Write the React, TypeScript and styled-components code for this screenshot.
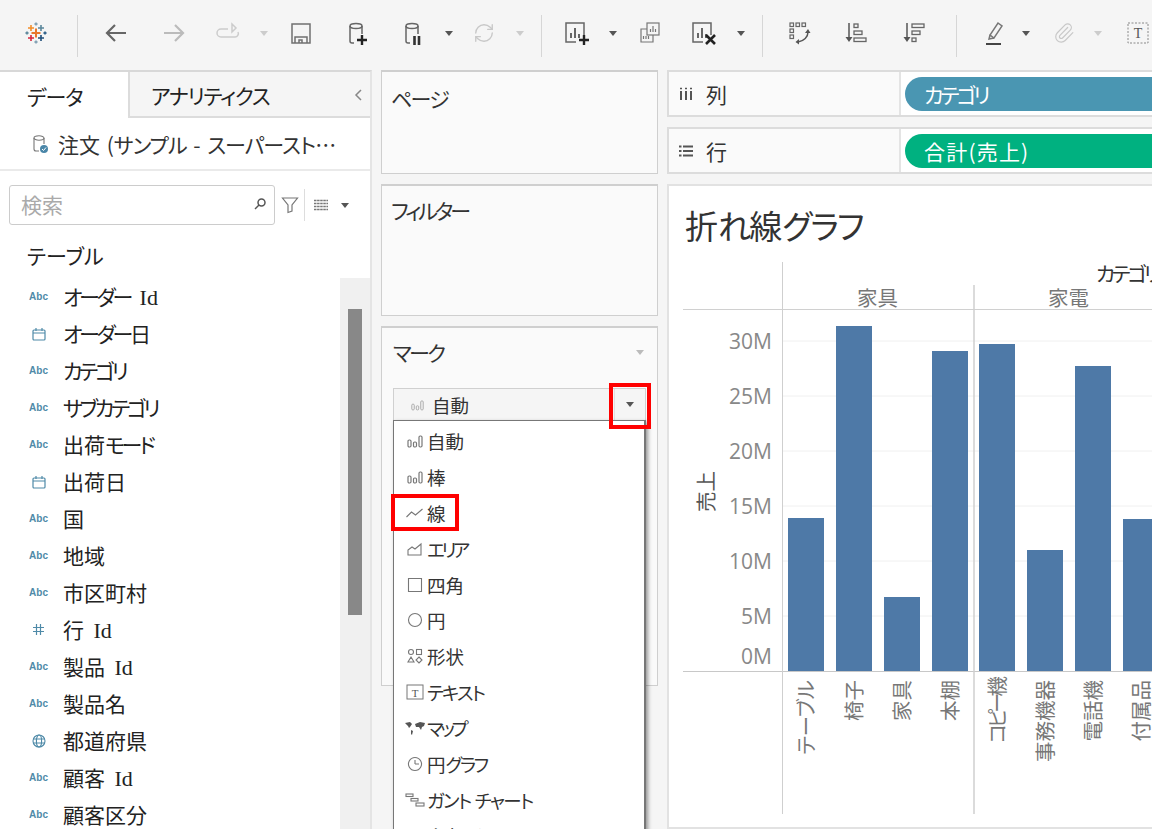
import React from "react";
import styled, { createGlobalStyle } from "styled-components";
import { Paperclip, RefreshCw } from "lucide-react";

const Global = createGlobalStyle`
  html, body { margin: 0; padding: 0; background: #f5f5f5; }
  * { box-sizing: border-box; }
`;

const Page = styled.div`
  width: 1152px; height: 829px; overflow: hidden; display: flex; flex-direction: column;
  background: #f5f5f5; color: #222;
  font-family: "Noto Sans CJK JP", "Noto Sans", sans-serif;
  font-feature-settings: "palt";
`;
const Toolbar = styled.div`height: 70px; flex: none; display: flex; align-items: center; margin-top: -2px;`;
const Slot = styled.div<{ $w: number }>`
  width: ${p => p.$w}px; flex: none; display: flex; align-items: center; justify-content: center;
`;
const ToolSep = styled.div`width: 1px; height: 42px; margin-top: 6px; background: #d6d6d6;`;
const Caret = styled.span<{ $tone?: string }>`
  display: inline-block; width: 0; height: 0; flex: none;
  border-left: 4px solid transparent; border-right: 4px solid transparent;
  border-top: 5px solid ${p => p.$tone ?? "#555"};
`;
const Main = styled.div`flex: 1; min-height: 0; display: flex; margin-top: 2px;`;
const Kana = styled.span<{ $ls: number }>`letter-spacing: ${p => p.$ls}px;`;
const Latin = styled.span`font-family: "Liberation Serif", serif; font-size: 22px; margin-left: 4px;`;

const Side = styled.aside`
  width: 372px; flex: none; display: flex; flex-direction: column; background: #fff;
  border-top: 2px solid #d8d8d8; border-right: 2px solid #e4e4e4; overflow: hidden;
`;
const Tabs = styled.div`height: 46px; flex: none; display: flex;`;
const ActiveTab = styled.div`width: 128px; padding-left: 27px; font-size: 21px; line-height: 48px;`;
const InactiveTab = styled.div`
  flex: 1; display: flex; justify-content: space-between; align-items: center;
  padding: 2px 7px 0 21px; font-size: 21px; background: #f5f5f5;
  border-left: 2px solid #dcdcdc; border-bottom: 2px solid #dcdcdc;
`;
const Source = styled.div`
  height: 53px; flex: none; display: flex; align-items: center; gap: 9px; padding-left: 32px;
  font-size: 21px; color: #333; border-bottom: 2px solid #eaeaea; white-space: nowrap; word-spacing: 2px;
`;
const SearchRow = styled.div`height: 54px; flex: none; display: flex; align-items: flex-end; padding-left: 9px;`;
const SearchBox = styled.div`
  width: 266px; height: 40px; display: flex; align-items: center; justify-content: space-between;
  padding: 0 7px 2px 11px; border: 1px solid #ccc; border-radius: 3px; font-size: 21px; color: #aaa;
`;
const SearchTools = styled.div`height: 40px; display: flex; align-items: center;`;
const ToolDivider = styled.div`width: 1px; height: 32px; background: #ddd;`;
const Heading = styled.div`height: 53px; flex: none; padding: 12px 0 0 27px; font-size: 21px; line-height: 37px;`;
const ListArea = styled.div`flex: 1; min-height: 0; display: flex;`;
const FieldList = styled.div`flex: 1; min-width: 0;`;
const Field = styled.div`height: 37px; display: flex; align-items: center; padding: 0 0 2px 27px; font-size: 21px; white-space: pre;`;
const FieldIcon = styled.div`
  width: 23px; margin: 2px 13px 0 0; flex: none; display: flex; justify-content: center;
  font: bold 10px "Liberation Sans", sans-serif; color: #4f8aa8;
`;
const Track = styled.div`width: 30px; flex: none; background: #f0f0f0; padding: 31px 0 0 8px;`;
const Thumb = styled.div`width: 14px; height: 306px; background: #888;`;

const MiddleColumn = styled.div`
  width: 277px; flex: none; margin: 0 9px; display: flex; flex-direction: column; gap: 10px;
`;
const Card = styled.section<{ $h: number; $pad: number }>`
  height: ${p => p.$h}px; flex: none; padding: ${p => p.$pad}px 11px 0 9px; background: #fafafa;
  border: 1px solid #cfcfcf; border-top-width: 2px;
  font-size: 21px; line-height: 30px; color: #333;
`;
const MarkHead = styled.div`display: flex; justify-content: space-between; align-items: center; padding: 0 2px; margin-bottom: 21px;`;
const Selector = styled.div`
  position: relative; height: 33px; margin-left: 2px; display: flex; align-items: center;
  background: #f5f5f5; border: 1px solid #d0d0d0; font-size: 18.5px; padding-left: 17px; gap: 8px;
`;
const SelectorCaret = styled.div`
  position: absolute; right: 0; top: 0; bottom: 0; width: 31px; display: flex; align-items: center;
  justify-content: center; border-left: 1px solid #e0e0e0;
`;
const RedBox = styled.div`
  position: absolute; left: 215px; top: -6px; width: 42px; height: 46px; border: 4px solid #ff0000; z-index: 3;
`;
const Menu = styled.div`
  position: absolute; left: -1px; right: -1px; top: 31px; padding-top: 2px; height: 480px; background: #fff;
  border: 1px solid #777; border-right-width: 2px; box-shadow: 2px 2px 4px rgba(0,0,0,.4); z-index: 2;
`;
const MenuItem = styled.div<{ $marked?: boolean }>`
  position: relative; height: 35.9px; display: flex; align-items: center; padding-left: 9px;
  font-size: 18.5px; color: #333; white-space: pre;
  ${p => p.$marked ? `&::after { content: ""; position: absolute; box-sizing: border-box; left: -3px; top: -1px; width: 68px; height: 37px; border: 4px solid #ff0000; }` : ""}
`;
const MenuIcon = styled.div`width: 24px; flex: none; display: flex; justify-content: center;`;

const RightColumn = styled.div`flex: 1; min-width: 0; margin-right: -10px; display: flex; flex-direction: column; gap: 10px;`;
const Shelf = styled.div`
  height: 47px; flex: none; display: flex; background: #fff;
  border: 1px solid #dcdcdc; border-top-width: 2px; border-bottom-width: 2px; border-left-width: 2px;
`;
const ShelfLabel = styled.div`
  width: 232px; flex: none; display: flex; align-items: center; gap: 13px; padding-left: 10px;
  background: #fafafa; border-right: 2px solid #e4e4e4; font-size: 21px; color: #333;
`;
const ShelfBody = styled.div`flex: 1; display: flex; align-items: center; padding-left: 4px;`;
const Pill = styled.div<{ $color: string; $ls?: number }>`
  flex: 1; height: 34px; display: flex; align-items: center; padding-left: 19px; color: #fff;
  font-size: 21px; letter-spacing: ${p => p.$ls ?? 0}px; background: ${p => p.$color}; border-radius: 17px 0 0 17px;
`;
const Viz = styled.section`
  flex: 1; min-height: 0; overflow: hidden; background: #fff;
  border: 2px solid #e2e2e2; border-right: 0;
`;
const VizTitle = styled.h1`
  margin: 0; height: 72px; padding: 16px 0 0 16px; font-size: 33px; line-height: 46px; font-weight: 400; color: #333;
`;
const ChartSvg = styled.svg`display: block; font-family: "Noto Sans CJK JP", sans-serif; font-feature-settings: "palt";`;
const HeaderText = styled.text<{ $tone?: string; $ls?: number }>`
  font-size: 20.5px; fill: ${p => p.$tone ?? "#777"}; letter-spacing: ${p => p.$ls ?? 0}px;
`;
const TickText = styled.text`font: 21px "Open Sans", sans-serif; fill: #888; text-anchor: end;`;
const BarLabel = styled.text<{ $ls: number }>`font-size: 20.5px; fill: #777; text-anchor: end; letter-spacing: ${p => p.$ls}px;`;

/* Kana in the original UI font is narrower than in the installed one */
const Jp = ({ t, ls = -3.2 }: { t: string; ls?: number }) => (
  <span>
    {t.split(/([ぁ-んァ-ヶー]+| Id)/).map((part, i) =>
      part === " Id" ? <Latin key={i}> Id</Latin>
        : i % 2 ? <Kana key={i} $ls={ls}>{part}</Kana>
          : part
    )}
  </span>
);

const G = ({ w = 24, h = 24, children }: { w?: number; h?: number; children: React.ReactNode }) => (
  <svg width={w} height={h} viewBox={`0 0 ${w} ${h}`} fill="none" stroke="#666" strokeWidth="1.5">{children}</svg>
);

const Plus = ({ x, y, s, c }: { x: number; y: number; s: number; c: string }) => (
  <path d={`M${x - s} ${y}H${x + s}M${x} ${y - s}V${y + s}`} stroke={c} strokeWidth={s > 3 ? 2 : 1.6} />
);
const Logo = () => (
  <G>
    <Plus x={12} y={12} s={4.5} c="#e8762b" />
    <Plus x={7} y={7} s={3} c="#f28e2b" />
    <Plus x={17} y={7} s={3} c="#5b879b" />
    <Plus x={7} y={17} s={3} c="#d7263d" />
    <Plus x={17} y={17} s={3} c="#1f4e79" />
    <Plus x={12} y={3} s={1.6} c="#7f9fb2" />
    <Plus x={12} y={21} s={1.6} c="#7f9fb2" />
    <Plus x={3} y={12} s={1.6} c="#5b879b" />
    <Plus x={21} y={12} s={1.6} c="#2d5f88" />
  </G>
);
const Arrow = ({ flip, c }: { flip?: boolean; c: string }) => (
  <G>
    <path d={flip ? "M2 12H21M13 4l8 8-8 8" : "M22 12H3M11 4l-8 8 8 8"} stroke={c} strokeWidth="2.2" />
  </G>
);
const Redo = () => (
  <G>
    <path d="M12 8H5a3.5 3.5 0 0 0 0 8h14a3.5 3.5 0 0 0 3-5M16 3v8l4-4z" stroke="#ccc" />
  </G>
);
const Save = () => (
  <G>
    <rect x="3" y="3" width="18" height="19" stroke="#707070" />
    <path d="M6 22v-6h12v6M10 22v-3h3v3" stroke="#707070" />
  </G>
);
const Db = ({ pause }: { pause?: boolean }) => (
  <G>
    <ellipse cx="10" cy="5" rx="6" ry="2.5" stroke="#666" />
    <path d="M4 5v15a2 2 0 0 0 2 2h2M16 5v8" stroke="#666" />
    {pause
      ? <path d="M12.5 15v9M17 15v9" stroke="#333" strokeWidth="2.6" />
      : <path d="M11 19h10M16 14v10" stroke="#222" strokeWidth="2.4" />}
  </G>
);
const Sheet = ({ mark }: { mark: "plus" | "x" }) => (
  <G w={26} h={26}>
    <path d="M20 15V3H2v19h10" stroke="#666" />
    <path d="M7 18v-5M11 18V8M15 18v-4" stroke="#666" strokeWidth="2" />
    {mark === "plus"
      ? <path d="M15 20h10M20 15v10" stroke="#222" strokeWidth="2.4" />
      : <path d="M15 15l9 9M24 15l-9 9" stroke="#222" strokeWidth="2.6" />}
  </G>
);
const Duplicate = () => (
  <G>
    <rect x="9" y="2" width="12" height="12" stroke="#777" strokeWidth="1.2" />
    <path d="M12.5 11V8M15 11V5M17.5 11V8" stroke="#777" strokeWidth="1.2" />
    <path d="M9 8H3v13h12v-7" stroke="#777" strokeWidth="1.2" />
    <path d="M5.5 18v-3M8 18v-3M10.500 18v-3" stroke="#777" strokeWidth="1.2" />
  </G>
);
const Swap = () => (
  <G>
    <g strokeWidth="1.2" stroke="#666">
      <rect x="2" y="2" width="3.500" height="3.500" /><rect x="8" y="2" width="3.500" height="3.500" /><rect x="14" y="2" width="3.500" height="3.500" />
      <rect x="2" y="8" width="3.500" height="3.500" /><rect x="2" y="14" width="3.500" height="3.500" />
    </g>
    <path d="M20 11c0 5-4 9-10 10" stroke="#555" />
    <path d="M17 12l3-4 2.500 4zM11 18l-3.500 3 3.500 2.500z" fill="#555" stroke="none" />
  </G>
);
const Sort = ({ desc }: { desc?: boolean }) => (
  <G>
    <path d="M4 2v17" stroke="#555" />
    <path d="M0.500 16h7L4 21z" fill="#555" stroke="none" />
    <g strokeWidth="1.300" stroke="#666">
      {desc ? (
        <>
          <rect x="9" y="3" width="12" height="3.500" /><rect x="9" y="10" width="8" height="3.500" /><rect x="9" y="17" width="4" height="3.500" />
        </>
      ) : (
        <>
          <rect x="9" y="3" width="4" height="3.500" /><rect x="9" y="10" width="8" height="3.500" /><rect x="9" y="17" width="12" height="3.500" />
        </>
      )}
    </g>
  </G>
);
const Highlighter = () => (
  <G>
    <path d="M15 2l4 3-8 12-4-3zM7 14l-1 4 5-1" stroke="#777" />
    <path d="M3 23h15" stroke="#444" strokeWidth="2" />
  </G>
);
const TextBox = () => (
  <svg width="22" height="22" viewBox="0 0 22 22" fill="none">
    <rect x="1" y="1" width="20" height="20" stroke="#888" strokeDasharray="2 1.500" />
    <text x="11" y="16" textAnchor="middle" fontFamily="Liberation Serif" fontSize="14" fill="#555">T</text>
  </svg>
);
const Chevron = () => <G w={10} h={14}><path d="M8 2L3 7l5 5" stroke="#888" /></G>;
const SourceIcon = () => (
  <G w={17} h={20}>
    <ellipse cx="7" cy="4" rx="5" ry="2.200" stroke="#777" strokeWidth="1.100" />
    <path d="M2 4v11a2 2 0 0 0 2 2h3M12 4v6" stroke="#777" strokeWidth="1.100" />
    <circle cx="12" cy="15" r="4" fill="#4a86a8" stroke="none" />
    <path d="M10 15l1.500 1.500 2.500-3" stroke="#fff" strokeWidth="1" />
  </G>
);
const Magnifier = () => <G w={14} h={14}><circle cx="8.500" cy="5.500" r="3.500" stroke="#555" /><path d="M6 8l-4 4" stroke="#555" /></G>;
const Funnel = () => <G w={18} h={18}><path d="M1.500 2h15L11 9v6l-4 1.500V9z" stroke="#777" strokeWidth="1.200" /></G>;
const Lines = () => (
  <G w={16} h={14}>
    <path d="M1 2.500h14M1 5.500h14M1 8.500h14M1 11.500h14" stroke="#777" strokeWidth="1.500" strokeDasharray="2.500 0.600" />
  </G>
);
const Calendar = () => (
  <G w={14} h={14}><path d="M2 3h10a1 1 0 0 1 1 1v8a1 1 0 0 1-1 1H2a1 1 0 0 1-1-1V4a1 1 0 0 1 1-1zM1 6h12M4 1v3M10 1v3" stroke="#4f8aa8" strokeWidth="1.200" /></G>
);
const Hash = () => <G w={13} h={13}><path d="M4.500 1v11M8.500 1v11M1 4.500h11M1 8.500h11" stroke="#4f8aa8" strokeWidth="1.200" /></G>;
const Globe = () => (
  <G w={14} h={14}>
    <circle cx="7" cy="7" r="6" stroke="#4f8aa8" strokeWidth="1.100" />
    <ellipse cx="7" cy="7" rx="2.600" ry="6" stroke="#4f8aa8" strokeWidth="1.100" />
    <path d="M1 5h12M1 9h12" stroke="#4f8aa8" strokeWidth="1.100" />
  </G>
);
const Bars = ({ tone = "#777", w = 16 }: { tone?: string; w?: number }) => (
  <svg width={w} height={14} viewBox="0 0 16 14" fill="none">
    <g stroke={tone} strokeWidth="1.200">
      <rect x="1" y="6" width="3" height="7" rx="1.200" /><rect x="6.500" y="8" width="3" height="5" rx="1.200" /><rect x="12" y="2" width="3" height="11" rx="1.200" />
    </g>
  </svg>
);
const Pen = ({ d, w = 18, h = 14 }: { d: string; w?: number; h?: number }) => (
  <G w={w} h={h}><path d={d} stroke="#777" strokeWidth="1.100" /></G>
);
const MapGlyph = () => (
  <svg width="21" height="14" viewBox="0 0 21 14" fill="#555">
    <path d="M0 2l5-1 2 2-2 3-1 1-1-2zM6 9l2 1-1 4-1-1zM10 3l5-2 5 1-1 3-2 1-1 3-2-3-3 0z" />
  </svg>
);
const Shapes = () => (
  <G w={16} h={16}>
    <g stroke="#777" strokeWidth="1.100">
      <circle cx="4" cy="4" r="2.500" /><rect x="9.500" y="1.500" width="5" height="5" />
      <path d="M4 9l3 5H1zM12 9l3 3-3 3-3-3z" />
    </g>
  </G>
);
const Gantt = () => (
  <G w={20} h={14}>
    <g stroke="#777" strokeWidth="1.100"><rect x="1" y="1" width="7" height="2.500" /><rect x="6" y="5.500" width="7" height="2.500" /><rect x="11" y="10" width="8" height="3" /></g>
  </G>
);

const fields: [string, "abc" | "cal" | "num" | "geo"][] = [
  ["オーダー Id", "abc"], ["オーダー日", "cal"], ["カテゴリ", "abc"], ["サブカテゴリ", "abc"], ["出荷モード", "abc"],
  ["出荷日", "cal"], ["国", "abc"], ["地域", "abc"], ["市区町村", "abc"], ["行 Id", "num"], ["製品 Id", "abc"],
  ["製品名", "abc"], ["都道府県", "geo"], ["顧客 Id", "abc"], ["顧客区分", "abc"],
];
const fieldGlyph = (k: string) => k === "abc" ? "Abc" : k === "cal" ? <Calendar /> : k === "num" ? <Hash /> : <Globe />;

const menu: [string, number, React.ReactNode][] = [
  ["自動", 0, <Bars />],
  ["棒", 0, <Bars />],
  ["線", 0, <Pen d="M0.500 11l5-5 4 3 7-6" />],
  ["エリア", -3.5, <Pen w={16} d="M1 13V8l4-3 3 2 6-5v11z" />],
  ["四角", 0, <Pen w={16} h={16} d="M1.500 1.500h13v13h-13z" />],
  ["円", 0, <G w={16} h={16}><circle cx="8" cy="8" r="6.500" stroke="#777" strokeWidth="1.100" /></G>],
  ["形状", 0, <Shapes />],
  ["テキスト", -1.8, <svg width="18" height="16" viewBox="0 0 18 16" fill="none"><rect x="1" y="1" width="16" height="14" stroke="#777" /><text x="9" y="12.500" textAnchor="middle" fontFamily="Liberation Serif" fontSize="11" fill="#555">T</text></svg>],
  ["マップ", -3.3, <MapGlyph />],
  ["円グラフ", -2.3, <Pen w={16} h={16} d="M8 1.500a6.500 6.500 0 1 1-.01 0zM8 8V4M8 8h4" />],
  ["ガント チャート", -1.6, <Gantt />],
  ["多角形", 0, <Pen w={16} h={14} d="M1 1h14v12H1z" />],
];

const bars: [number, number, string, number][] = [
  [788, 518, "テーブル", 0], [836, 326, "椅子", 0], [884, 597, "家具", 0], [932, 351, "本棚", 0],
  [979, 344, "コピー機", -4], [1027, 550, "事務機器", 0], [1075, 366, "電話機", 0], [1123, 519, "付属品", 0],
];
const ticks: [string, number][] = [["30M", 341], ["25M", 396], ["20M", 451], ["15M", 506], ["10M", 561], ["5M", 616]];

const Chart = () => (
  <ChartSvg width="490" height="569" viewBox="669 258 490 569">
    {ticks.map(([, y]) => <line key={y} x1="782" x2="1159" y1={y} y2={y} stroke="#f0f0f0" />)}
    {bars.map(([x, top]) => <rect key={x} x={x} y={top} width="36" height={671 - top} fill="#4e79a7" />)}
    <line x1="683" x2="1159" y1="309.500" y2="309.500" stroke="#d0d0d0" />
    <line x1="683" x2="1159" y1="671.500" y2="671.500" stroke="#c8c8c8" />
    <line x1="782.500" x2="782.500" y1="262" y2="814" stroke="#cfcfcf" />
    <line x1="974" x2="974" y1="285" y2="814" stroke="#cfcfcf" strokeWidth="1.500" />
    <HeaderText $tone="#333" $ls={-3} x="1096" y="282">カテゴリ</HeaderText>
    <HeaderText x="857" y="306">家具</HeaderText>
    <HeaderText x="1048" y="306">家電</HeaderText>
    {ticks.map(([t, y]) => <TickText key={t} x="772" y={y + 8}>{t}</TickText>)}
    <TickText x="772" y="664">0M</TickText>
    <HeaderText $tone="#555" transform="translate(714 512) rotate(-90)" x="0" y="0">売上</HeaderText>
    {bars.map(([x, , label, ls]) => (
      <BarLabel key={label} $ls={ls} transform={`translate(${x + 26} 680) rotate(-90)`} x="0" y="0">{label}</BarLabel>
    ))}
  </ChartSvg>
);

export default function App() {
  return (
    <Page>
      <Global />
      <Toolbar>
        <Slot $w={72}><Logo /></Slot>
        <Slot $w={10}><ToolSep /></Slot>
        <Slot $w={68}><Arrow c="#666" /></Slot>
        <Slot $w={48}><Arrow flip c="#bbb" /></Slot>
        <Slot $w={60}><Redo /></Slot>
        <Slot $w={12}><Caret $tone="#ccc" /></Slot>
        <Slot $w={62}><Save /></Slot>
        <Slot $w={52}><Db /></Slot>
        <Slot $w={60}><Db pause /></Slot>
        <Slot $w={10}><Caret /></Slot>
        <Slot $w={60}><RefreshCw size={22} strokeWidth={1.500} color="#c8c8c8" /></Slot>
        <Slot $w={12}><Caret $tone="#ccc" /></Slot>
        <Slot $w={30}><ToolSep /></Slot>
        <Slot $w={42}><Sheet mark="plus" /></Slot>
        <Slot $w={30}><Caret /></Slot>
        <Slot $w={44}><Duplicate /></Slot>
        <Slot $w={64}><Sheet mark="x" /></Slot>
        <Slot $w={10}><Caret /></Slot>
        <Slot $w={32}><ToolSep /></Slot>
        <Slot $w={44}><Swap /></Slot>
        <Slot $w={70}><Sort /></Slot>
        <Slot $w={46}><Sort desc /></Slot>
        <Slot $w={36}><ToolSep /></Slot>
        <Slot $w={42}><Highlighter /></Slot>
        <Slot $w={20}><Caret /></Slot>
        <Slot $w={56}><Paperclip size={22} strokeWidth={1.300} color="#c8c8c8" /></Slot>
        <Slot $w={12}><Caret $tone="#ccc" /></Slot>
        <Slot $w={68}><TextBox /></Slot>
      </Toolbar>
      <Main>
        <Side>
          <Tabs>
            <ActiveTab><Jp t="データ" ls={-1} /></ActiveTab>
            <InactiveTab><Jp t="アナリティクス" ls={-1.3} /><Chevron /></InactiveTab>
          </Tabs>
          <Source><SourceIcon /><Jp t="注文 (サンプル - スーパースト…" ls={-1} /></Source>
          <SearchRow>
            <SearchBox>検索<Magnifier /></SearchBox>
            <SearchTools>
              <Slot $w={29}><Funnel /></Slot>
              <ToolDivider />
              <Slot $w={32}><Lines /></Slot>
              <Slot $w={16}><Caret /></Slot>
            </SearchTools>
          </SearchRow>
          <Heading>テーブル</Heading>
          <ListArea>
            <FieldList>
              {fields.map(([name, kind]) => (
                <Field key={name}><FieldIcon>{fieldGlyph(kind)}</FieldIcon><Jp t={name} /></Field>
              ))}
            </FieldList>
            <Track><Thumb /></Track>
          </ListArea>
        </Side>
        <MiddleColumn>
          <Card $h={104} $pad={11}><Jp t="ページ" ls={-1.7} /></Card>
          <Card $h={132} $pad={9}><Jp t="フィルター" ls={-3} /></Card>
          <Card $h={360} $pad={9}>
            <MarkHead><Jp t="マーク" ls={-2.7} /><Caret $tone="#bbb" /></MarkHead>
            <Selector>
              <Bars tone="#aaa" w={13} />自動
              <SelectorCaret><Caret /></SelectorCaret>
              <RedBox />
              <Menu>
                {menu.map(([label, ls, icon]) => (
                  <MenuItem key={label} $marked={label === "線"}>
                    <MenuIcon>{icon}</MenuIcon><Jp t={label} ls={ls} />
                  </MenuItem>
                ))}
              </Menu>
            </Selector>
          </Card>
        </MiddleColumn>
        <RightColumn>
          <Shelf>
            <ShelfLabel>
              <G w={14} h={14}><path d="M2 4v9M7 4v9M12 4v9M2 .800v1.400M7 .800v1.400M12 .800v1.400" stroke="#555" strokeWidth="2" /></G>
              列
            </ShelfLabel>
            <ShelfBody><Pill $color="#4a96b2" $ls={-3}>カテゴリ</Pill></ShelfBody>
          </Shelf>
          <Shelf>
            <ShelfLabel>
              <G w={14} h={14}><path d="M0 2.500h2.500M4 2.500h10M0 7h2.500M4 7h10M0 11.500h2.500M4 11.500h10" stroke="#555" strokeWidth="2" /></G>
              行
            </ShelfLabel>
            <ShelfBody><Pill $color="#00b180" $ls={1.2}>合計(売上)</Pill></ShelfBody>
          </Shelf>
          <Viz>
            <VizTitle><Jp t="折れ線グラフ" ls={-1.8} /></VizTitle>
            <Chart />
          </Viz>
        </RightColumn>
      </Main>
    </Page>
  );
}
